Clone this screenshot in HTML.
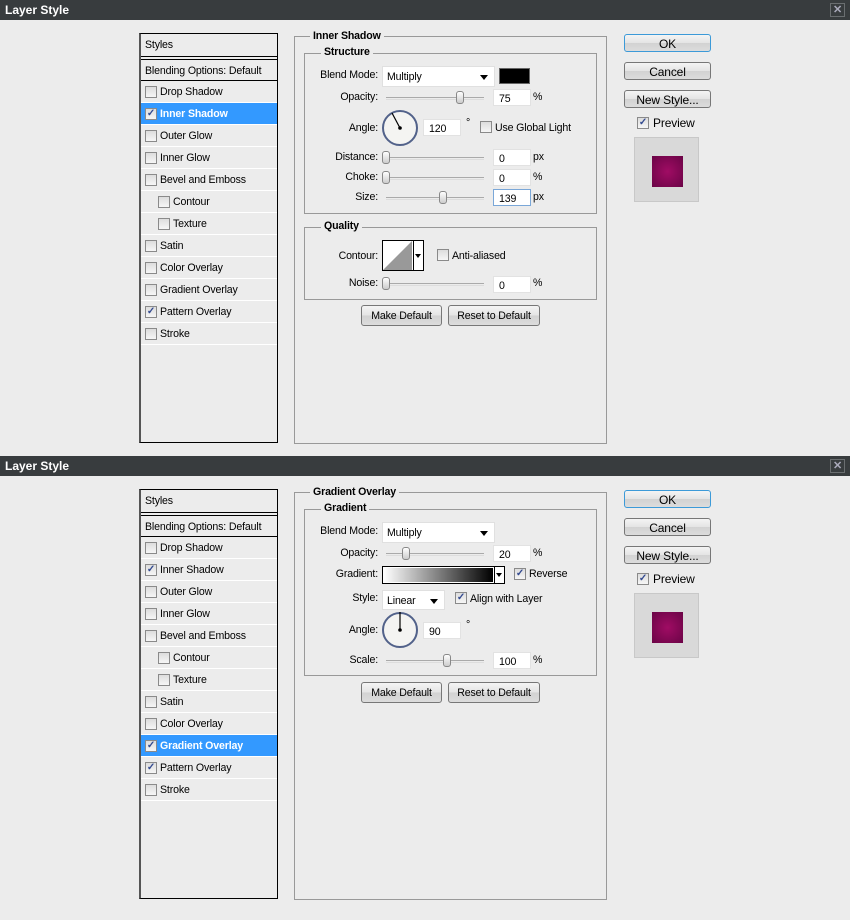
<!DOCTYPE html>
<html><head><meta charset="utf-8"><style>
*{box-sizing:border-box;margin:0;padding:0}
body{width:850px;height:920px;background:#ececec;font-family:"Liberation Sans",sans-serif;font-size:10.6px;letter-spacing:-0.15px;color:#000;position:relative;overflow:hidden}
.dlg{position:absolute;left:0;width:850px;height:456px;background:#ececec}
.a{position:absolute;white-space:nowrap}
.tb{position:absolute;left:0;top:0;width:850px;height:20px;background:#383c3e;color:#fff;font-weight:bold;font-size:12px;letter-spacing:0;padding:3px 0 0 5px}
.cl{position:absolute;left:830px;top:3px;width:15px;height:14px;border:1px solid #6a6e70;color:#aab;font-size:11px;line-height:12px;text-align:center;font-weight:bold}
.list{position:absolute;left:139px;top:33px;width:139px;height:410px;border:1px solid #000;border-left:2px solid #555}
.row{position:absolute;left:0;width:136px;height:22px;border-bottom:1px solid #fff;padding:5px 0 0 19px}
.row.sub{padding-left:32px}
.row.sel{background:#3399ff;color:#fff;font-weight:bold}
.cb{position:absolute;width:12px;height:12px;border:1px solid #8a8a8a;background:linear-gradient(#ddd,#f6f6f6);font-size:10px;line-height:10px;text-align:center;color:#334a90;font-weight:bold}
.row .cb{left:4px;top:5px}
.row.sub .cb{left:17px}
.grp{position:absolute;border:1px solid #999}
.lg{position:absolute;background:#ececec;font-weight:bold;padding:0 3px}
.lbl{position:absolute;text-align:right;width:90px}
.inp{position:absolute;width:38px;height:17px;background:#fff;border:1px solid #e2e2e2;padding:3px 0 0 5px}
.trk{position:absolute;height:3px;border-top:1px solid #aaa;border-bottom:1px solid #ddd}
.th{position:absolute;width:8px;height:13px;border:1px solid #888;border-radius:3px;background:linear-gradient(#fff,#ccc)}
.btn{position:absolute;border:1px solid #777;border-radius:3px;background:linear-gradient(#f4f4f4 0,#e4e4e4 50%,#d2d2d2 51%,#dcdcdc);text-align:center}
.dd{position:absolute;background:#fff;border:1px solid #e0e0e0;padding:4px 0 0 4px}
.dd:after{content:"";position:absolute;right:6px;top:8px;border-left:4px solid transparent;border-right:4px solid transparent;border-top:5px solid #000}
</style></head><body>

<div class="dlg" style="top:0">
<div class="tb">Layer Style</div><div class="cl">✕</div>
<div class="list">
 <div class="row" style="top:0;height:23px;border-bottom:1px solid #000;padding-left:4px">Styles</div>
 <div class="row" style="top:25px;height:22px;border-top:1px solid #000;border-bottom:1px solid #000;padding-left:4px">Blending Options: Default</div>
 <div class="row" style="top:47px"><span class="cb"></span>Drop Shadow</div>
 <div class="row sel" style="top:69px"><span class="cb">✓</span>Inner Shadow</div>
 <div class="row" style="top:91px"><span class="cb"></span>Outer Glow</div>
 <div class="row" style="top:113px"><span class="cb"></span>Inner Glow</div>
 <div class="row" style="top:135px"><span class="cb"></span>Bevel and Emboss</div>
 <div class="row sub" style="top:157px"><span class="cb"></span>Contour</div>
 <div class="row sub" style="top:179px"><span class="cb"></span>Texture</div>
 <div class="row" style="top:201px"><span class="cb"></span>Satin</div>
 <div class="row" style="top:223px"><span class="cb"></span>Color Overlay</div>
 <div class="row" style="top:245px"><span class="cb"></span>Gradient Overlay</div>
 <div class="row" style="top:267px"><span class="cb">✓</span>Pattern Overlay</div>
 <div class="row" style="top:289px"><span class="cb"></span>Stroke</div>
</div>
<div class="grp" style="left:294px;top:36px;width:313px;height:408px"></div>
<div class="lg" style="left:310px;top:30px">Inner Shadow</div>
<div class="grp" style="left:304px;top:53px;width:293px;height:161px"></div>
<div class="lg" style="left:321px;top:46px">Structure</div>
<div class="lbl" style="left:288px;top:69px">Blend Mode:</div>
<div class="dd" style="left:382px;top:66px;width:113px;height:21px">Multiply</div>
<div class="a" style="left:499px;top:68px;width:31px;height:16px;background:#000;border:1px solid #666"></div>
<div class="lbl" style="left:288px;top:91px">Opacity:</div>
<div class="trk" style="left:386px;top:97px;width:98px"></div><div class="th" style="left:456px;top:91px"></div>
<div class="inp" style="left:493px;top:89px">75</div><div class="a" style="left:533px;top:91px">%</div>
<div class="lbl" style="left:288px;top:122px">Angle:</div>
<svg class="a" style="left:381px;top:109px" width="38" height="38"><circle cx="19" cy="19" r="17" fill="#f4f4f2" stroke="#52628a" stroke-width="2"/><line x1="19" y1="19" x2="11" y2="4" stroke="#000" stroke-width="1.2"/><circle cx="19" cy="19" r="1.8"/></svg>
<div class="inp" style="left:423px;top:119px">120</div><div class="a" style="left:466px;top:117px">°</div>
<span class="cb" style="left:480px;top:121px"></span><div class="a" style="left:495px;top:122px">Use Global Light</div>
<div class="lbl" style="left:288px;top:151px">Distance:</div>
<div class="trk" style="left:386px;top:157px;width:98px"></div><div class="th" style="left:382px;top:151px"></div>
<div class="inp" style="left:493px;top:149px">0</div><div class="a" style="left:533px;top:151px">px</div>
<div class="lbl" style="left:288px;top:171px">Choke:</div>
<div class="trk" style="left:386px;top:177px;width:98px"></div><div class="th" style="left:382px;top:171px"></div>
<div class="inp" style="left:493px;top:169px">0</div><div class="a" style="left:533px;top:171px">%</div>
<div class="lbl" style="left:288px;top:191px">Size:</div>
<div class="trk" style="left:386px;top:197px;width:98px"></div><div class="th" style="left:439px;top:191px"></div>
<div class="inp" style="left:493px;top:189px;border-color:#7aa7d8">139</div><div class="a" style="left:533px;top:191px">px</div>
<div class="grp" style="left:304px;top:227px;width:293px;height:73px"></div>
<div class="lg" style="left:321px;top:220px">Quality</div>
<div class="lbl" style="left:288px;top:250px">Contour:</div>
<div class="a" style="left:382px;top:240px;width:42px;height:31px;border:1px solid #000;background:#fff"><svg width="30" height="29" style="position:absolute;left:0;top:0"><polygon points="0,29 29,0 29,29" fill="#999"/></svg><div style="position:absolute;left:30px;top:0;width:1px;height:29px;background:#000"></div><div style="position:absolute;left:32px;top:13px;border-left:3px solid transparent;border-right:3px solid transparent;border-top:4px solid #000"></div></div>
<span class="cb" style="left:437px;top:249px"></span><div class="a" style="left:452px;top:250px">Anti-aliased</div>
<div class="lbl" style="left:288px;top:277px">Noise:</div>
<div class="trk" style="left:386px;top:283px;width:98px"></div><div class="th" style="left:382px;top:277px"></div>
<div class="inp" style="left:493px;top:276px">0</div><div class="a" style="left:533px;top:277px">%</div>
<div class="btn" style="left:361px;top:305px;width:81px;height:21px;padding-top:4px">Make Default</div>
<div class="btn" style="left:448px;top:305px;width:92px;height:21px;padding-top:4px">Reset to Default</div>
<div class="btn" style="left:624px;top:34px;width:87px;height:18px;font-size:12px;padding-top:2px;border-color:#3c9ad8">OK</div>
<div class="btn" style="left:624px;top:62px;width:87px;height:18px;font-size:12px;padding-top:2px">Cancel</div>
<div class="btn" style="left:624px;top:90px;width:87px;height:18px;font-size:12px;padding-top:2px">New Style...</div>
<span class="cb" style="left:637px;top:117px">✓</span><div class="a" style="left:653px;top:116px;font-size:12px">Preview</div>
<div class="a" style="left:634px;top:137px;width:65px;height:65px;background:#d9d9d9;border:1px solid #c8c8c8"><div style="position:absolute;left:17px;top:18px;width:31px;height:31px;background:radial-gradient(#a00c64,#6a0446);"></div></div>
</div>

<div class="dlg" style="top:456px">
<div class="tb">Layer Style</div><div class="cl">✕</div>
<div class="list">
 <div class="row" style="top:0;height:23px;border-bottom:1px solid #000;padding-left:4px">Styles</div>
 <div class="row" style="top:25px;height:22px;border-top:1px solid #000;border-bottom:1px solid #000;padding-left:4px">Blending Options: Default</div>
 <div class="row" style="top:47px"><span class="cb"></span>Drop Shadow</div>
 <div class="row" style="top:69px"><span class="cb">✓</span>Inner Shadow</div>
 <div class="row" style="top:91px"><span class="cb"></span>Outer Glow</div>
 <div class="row" style="top:113px"><span class="cb"></span>Inner Glow</div>
 <div class="row" style="top:135px"><span class="cb"></span>Bevel and Emboss</div>
 <div class="row sub" style="top:157px"><span class="cb"></span>Contour</div>
 <div class="row sub" style="top:179px"><span class="cb"></span>Texture</div>
 <div class="row" style="top:201px"><span class="cb"></span>Satin</div>
 <div class="row" style="top:223px"><span class="cb"></span>Color Overlay</div>
 <div class="row sel" style="top:245px"><span class="cb">✓</span>Gradient Overlay</div>
 <div class="row" style="top:267px"><span class="cb">✓</span>Pattern Overlay</div>
 <div class="row" style="top:289px"><span class="cb"></span>Stroke</div>
</div>
<div class="grp" style="left:294px;top:36px;width:313px;height:408px"></div>
<div class="lg" style="left:310px;top:30px">Gradient Overlay</div>
<div class="grp" style="left:304px;top:53px;width:293px;height:167px"></div>
<div class="lg" style="left:321px;top:46px">Gradient</div>
<div class="lbl" style="left:288px;top:69px">Blend Mode:</div>
<div class="dd" style="left:382px;top:66px;width:113px;height:21px">Multiply</div>
<div class="lbl" style="left:288px;top:91px">Opacity:</div>
<div class="trk" style="left:386px;top:97px;width:98px"></div><div class="th" style="left:402px;top:91px"></div>
<div class="inp" style="left:493px;top:89px">20</div><div class="a" style="left:533px;top:91px">%</div>
<div class="lbl" style="left:288px;top:112px">Gradient:</div>
<div class="a" style="left:382px;top:110px;width:123px;height:18px;border:1px solid #000;background:#fff"><div style="position:absolute;left:1px;top:1px;width:109px;height:14px;background:linear-gradient(90deg,#fff,#000)"></div><div style="position:absolute;left:111px;top:0;width:1px;height:16px;background:#000"></div><div style="position:absolute;left:113px;top:6px;border-left:3px solid transparent;border-right:3px solid transparent;border-top:4px solid #000"></div></div>
<span class="cb" style="left:514px;top:112px">✓</span><div class="a" style="left:529px;top:112px">Reverse</div>
<div class="lbl" style="left:288px;top:136px">Style:</div>
<div class="dd" style="left:382px;top:134px;width:63px;height:20px">Linear</div>
<span class="cb" style="left:455px;top:136px">✓</span><div class="a" style="left:470px;top:137px">Align with Layer</div>
<div class="lbl" style="left:288px;top:168px">Angle:</div>
<svg class="a" style="left:381px;top:155px" width="38" height="38"><circle cx="19" cy="19" r="17" fill="#f4f4f2" stroke="#52628a" stroke-width="2"/><line x1="19" y1="19" x2="19" y2="1" stroke="#000" stroke-width="1.2"/><circle cx="19" cy="19" r="1.8"/></svg>
<div class="inp" style="left:423px;top:166px">90</div><div class="a" style="left:466px;top:163px">°</div>
<div class="lbl" style="left:288px;top:198px">Scale:</div>
<div class="trk" style="left:386px;top:204px;width:98px"></div><div class="th" style="left:443px;top:198px"></div>
<div class="inp" style="left:493px;top:196px">100</div><div class="a" style="left:533px;top:198px">%</div>
<div class="btn" style="left:361px;top:226px;width:81px;height:21px;padding-top:4px">Make Default</div>
<div class="btn" style="left:448px;top:226px;width:92px;height:21px;padding-top:4px">Reset to Default</div>
<div class="btn" style="left:624px;top:34px;width:87px;height:18px;font-size:12px;padding-top:2px;border-color:#3c9ad8">OK</div>
<div class="btn" style="left:624px;top:62px;width:87px;height:18px;font-size:12px;padding-top:2px">Cancel</div>
<div class="btn" style="left:624px;top:90px;width:87px;height:18px;font-size:12px;padding-top:2px">New Style...</div>
<span class="cb" style="left:637px;top:117px">✓</span><div class="a" style="left:653px;top:116px;font-size:12px">Preview</div>
<div class="a" style="left:634px;top:137px;width:65px;height:65px;background:#d9d9d9;border:1px solid #c8c8c8"><div style="position:absolute;left:17px;top:18px;width:31px;height:31px;background:radial-gradient(#a00c64,#6a0446);"></div></div>
</div>
</body></html>
